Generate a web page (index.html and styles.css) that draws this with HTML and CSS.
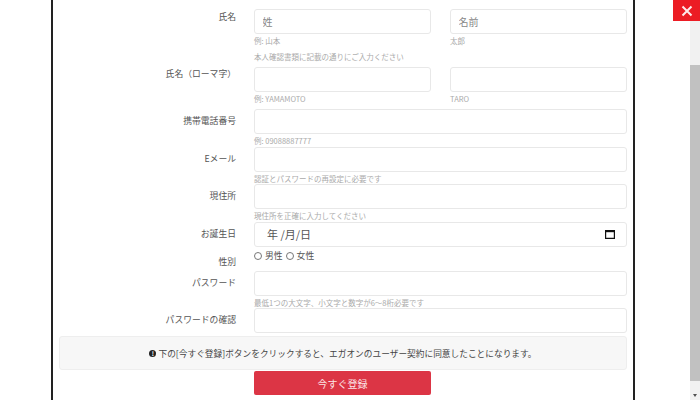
FILE: index.html
```html
<!DOCTYPE html>
<html lang="ja">
<head>
<meta charset="utf-8">
<title>登録</title>
<link rel="stylesheet" href="styles.css">
</head>
<body>
<div class="page">
  <main class="modal">
    <form class="form">
      <div class="row row-name">
        <label class="label label-first">氏名</label>
        <div class="pair">
          <div><input class="input" type="text" placeholder="姓"><p class="hint">例: 山本</p></div>
          <div><input class="input" type="text" placeholder="名前"><p class="hint">太郎</p></div>
        </div>
      </div>
      <p class="note">本人確認書類に記載の通りにご入力ください</p>
      <div class="row row-name">
        <label class="label label-name">氏名（ローマ字）</label>
        <div class="pair">
          <div><input class="input" type="text"><p class="hint">例: YAMAMOTO</p></div>
          <div><input class="input" type="text"><p class="hint">TARO</p></div>
        </div>
      </div>
      <div class="row row-plain">
        <label class="label">携帯電話番号</label>
        <div><input class="input" type="text"><p class="hint">例: 09088887777</p></div>
      </div>
      <div class="row row-plain">
        <label class="label">Eメール</label>
        <div><input class="input" type="text"><p class="hint">認証とパスワードの再設定に必要です</p></div>
      </div>
      <div class="row row-plain">
        <label class="label">現住所</label>
        <div><input class="input" type="text"><p class="hint">現住所を正確に入力してください</p></div>
      </div>
      <div class="row row-date">
        <label class="label">お誕生日</label>
        <div class="date">
          <span>年 /月/日</span>
          <svg class="cal" viewBox="0 0 10 10" width="10" height="10" aria-hidden="true"><path d="M.6 1.600h8.800v7.800H.6z" fill="none" stroke="#111" stroke-width="1.200"/><path d="M.6 1h8.800v2.200H.6z" fill="#111"/></svg>
        </div>
      </div>
      <div class="row row-gender">
        <label class="label">性別</label>
        <div class="radios">
          <span class="radio"></span><span>男性</span>
          <span class="radio"></span><span>女性</span>
        </div>
      </div>
      <div class="row row-plain">
        <label class="label">パスワード</label>
        <div><input class="input" type="password"><p class="hint">最低1つの大文字、小文字と数字が6～8桁必要です</p></div>
      </div>
      <div class="row row-last">
        <label class="label">パスワードの確認</label>
        <div><input class="input" type="password"></div>
      </div>
      <div class="notice"><span class="info">!</span>下の[今すぐ登録]ボタンをクリックすると、エガオンのユーザー契約に同意したことになります。</div>
      <div class="row">
        <span></span>
        <button class="submit" type="button">今すぐ登録</button>
      </div>
    </form>
  </main>
  <aside class="scrollbar">
    <div class="thumb"></div>
    <span class="arrow"></span>
  </aside>
  <button class="close" type="button" aria-label="閉じる">
    <svg viewBox="0 0 12 12" width="12" height="12" aria-hidden="true"><path d="M1.500 1.500l9 9M10.500 1.500l-9 9" stroke="#fdeaea" stroke-width="2" fill="none"/></svg>
  </button>
</div>
</body>
</html>
```
FILE: styles.css
```css
* { box-sizing: border-box; }
html, body { margin: 0; padding: 0; background: #fff; overflow: hidden; }
body { font-family: "Noto Sans CJK JP", "Liberation Sans", sans-serif; color: #555; }
.page { position: relative; width: 700px; height: 400px; overflow: hidden; display: flex; }
.modal { width: 584px; height: 400px; margin-left: 51px; border-left: 2px solid #222; border-right: 2px solid #222; flex: none; }
.form { padding: 9px 6px 0 6px; }
.row { display: grid; grid-template-columns: 177px 373px; column-gap: 18px; }
.row-name { margin-bottom: 4px; }
.row-plain { height: 37.500px; }
.row-date { height: 28px; }
.row-gender { height: 21px; }
.row-last { height: 27px; }
.label { display: block; padding-top: 5px; text-align: right; font-size: 8.800px; line-height: 13px; color: #555; }
.label-first { padding-top: 1px; }
.label-name { padding-top: 0; }
.pair { display: grid; grid-template-columns: 177px 177px; column-gap: 19px; }
.input { display: block; width: 100%; height: 25px; padding: 0 7.500px; border: 1.500px solid #e8e8e8; border-radius: 3px; background: #fff; font: 10px "Noto Sans CJK JP", sans-serif; outline: none; }
.input::placeholder { color: #888; }
.hint { margin: 1px 0 0; font-size: 7.500px; line-height: 11.500px; color: #aaa; white-space: nowrap; }
.note { margin: 3px 0 4px 195px; font-size: 7.500px; line-height: 12px; color: #aaa; }
.pair .hint { line-height: 12px; }
.date { display: flex; align-items: center; justify-content: space-between; height: 25px; padding: 0 11px 0 12px; border: 1.500px solid #e8e8e8; border-radius: 3px; font-size: 11px; color: #555; }
.cal { display: block; }
.radios { display: flex; align-items: center; height: 12px; font-size: 8.800px; color: #555; }
.radio { width: 8px; height: 8px; border: 1px solid #777; border-radius: 50%; margin-right: 3px; background: #fff; }
.radios span:nth-child(2) { margin-right: 3px; }
.notice { display: flex; align-items: center; justify-content: center; height: 34px; margin: 1px 0 1px; border: 1.500px solid #eee; border-radius: 3px; background: #f7f7f7; font-size: 8.700px; color: #444; white-space: nowrap; }
.info { display: inline-flex; align-items: center; justify-content: center; width: 7px; height: 7px; margin-right: 2px; border-radius: 50%; background: #222; color: #fff; font-size: 6px; font-weight: 700; line-height: 7px; }
.submit { width: 177px; height: 24px; padding: 0; border: 0; border-radius: 2px; background: #dc3545; color: #fbe4e6; font: 10px "Noto Sans CJK JP", sans-serif; grid-column: 2; }
.scrollbar { position: relative; width: 10px; height: 400px; margin-left: 55px; flex: none; background: #f1f1f1; display: flex; flex-direction: column; padding-top: 65px; }
.thumb { width: 100%; height: 316px; background: #c1c1c1; }
.arrow { width: 0; height: 0; margin: 13px auto 0; border: 2.500px solid transparent; border-top: 3px solid #505050; border-bottom: 0; }
.close { position: absolute; top: 0; right: 0; width: 27px; height: 21px; padding: 0; border: 0; background: #ec1c24; display: flex; align-items: center; justify-content: center; }
```
